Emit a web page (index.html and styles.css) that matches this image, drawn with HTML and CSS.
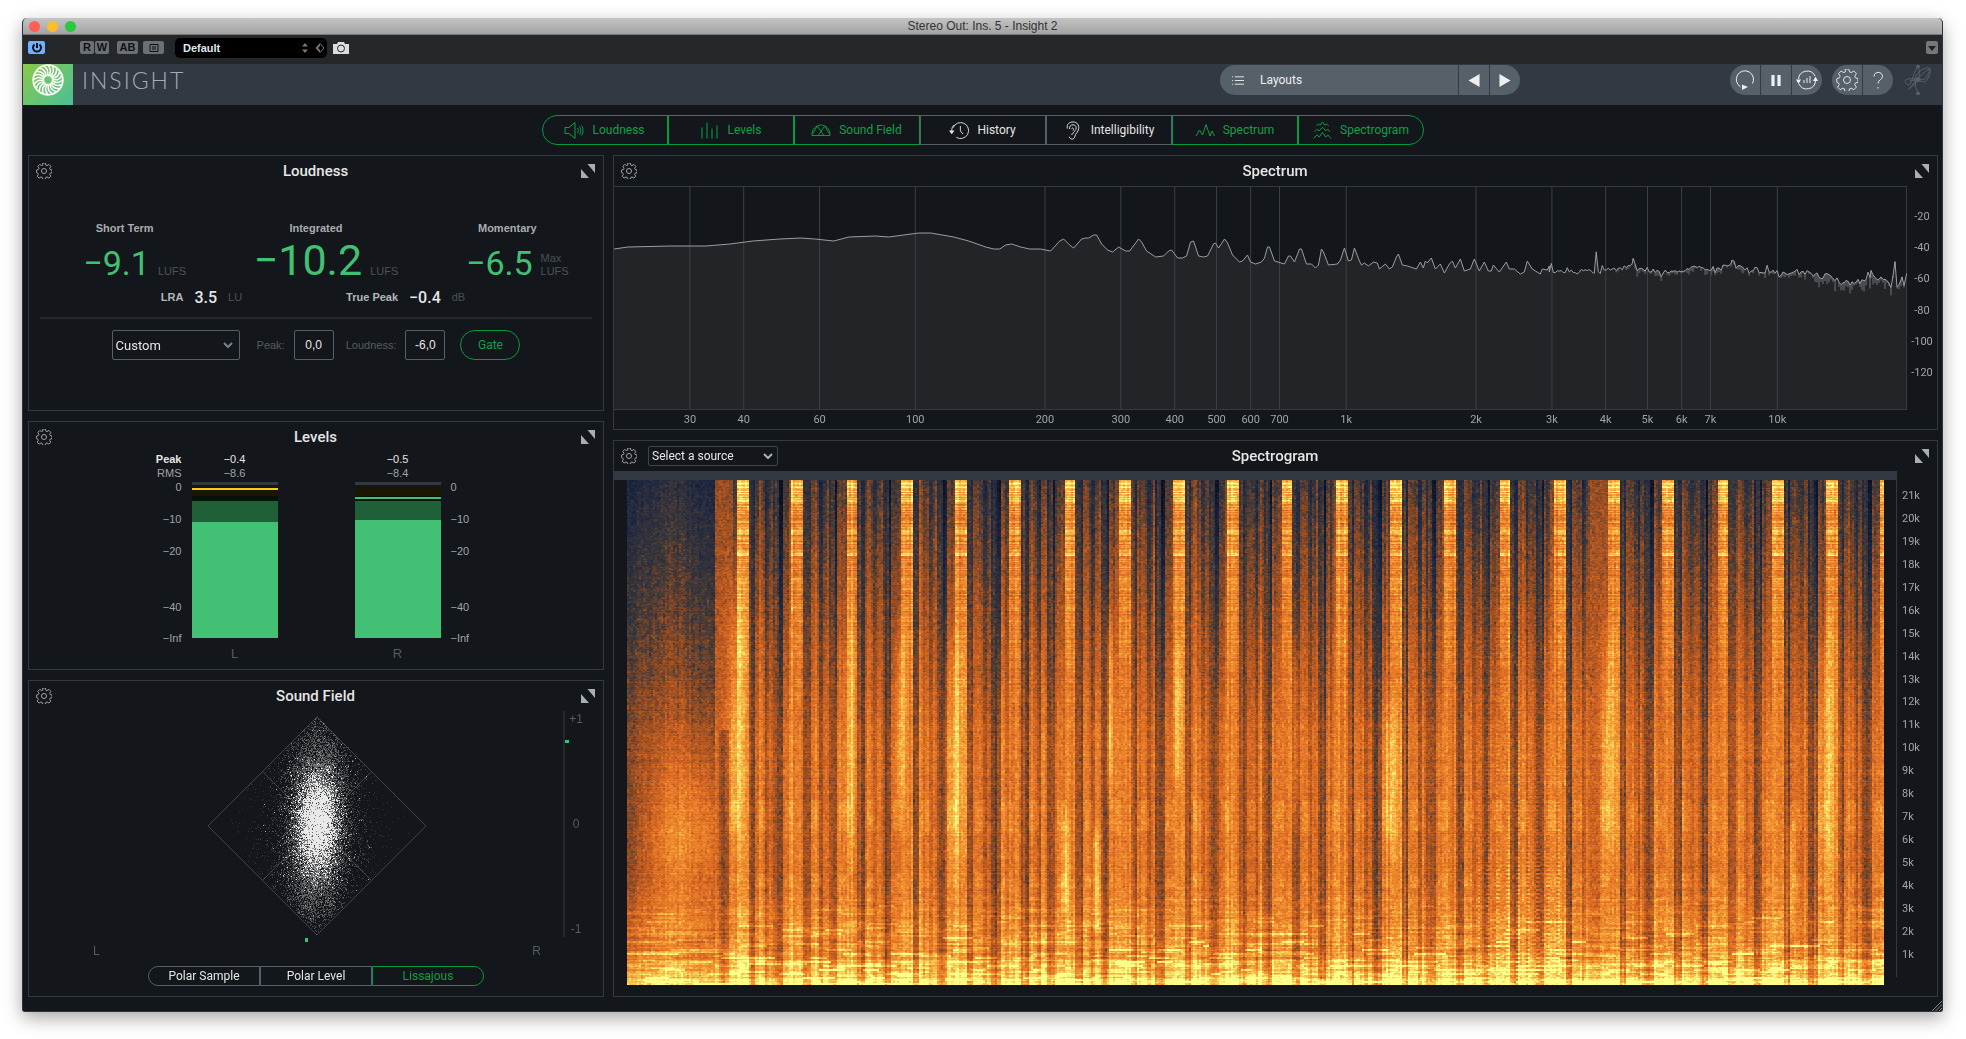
FILE: index.html
```html
<!DOCTYPE html>
<html lang="en">
<head>
    <meta charset="UTF-8">
    <meta name="viewport" content="width=device-width, initial-scale=1.0">
    <title>Stereo Out: Ins. 5 - Insight 2</title>
    <link rel="stylesheet" href="styles.css">
</head>
<body>
    <!-- Shared icons -->
    <svg class="sprite" aria-hidden="true">
        <symbol id="gear" viewBox="0 0 24 24">
            <path d="M10 1.5h4l.8 3.2 1.7.7 2.9-1.7 2.8 2.8-1.7 2.9.7 1.7 2.8.9v4l-2.8.8-.7 1.7 1.7 2.8-2.8 2.8-2.9-1.7-1.7.7-.8 2.9h-4l-.8-2.9-1.7-.7-2.9 1.7-2.8-2.8 1.7-2.8-.7-1.7L.9 16v-4l2.9-.9.7-1.7-1.7-2.9 2.8-2.8 2.9 1.7 1.7-.7z" transform="translate(0 -1.5)"/>
            <circle cx="12" cy="12" r="3.8"/>
        </symbol>
        <symbol id="expand" viewBox="0 0 14 14">
            <path d="M6.500 0H14v9zM0 5v9h8z"/>
        </symbol>
    </svg>

    <div class="window">
        <div class="title-bar">
            <div class="lights">
                <span class="light red"></span>
                <span class="light yellow"></span>
                <span class="light green"></span>
            </div>
            <span class="window-title">Stereo Out: Ins. 5 - Insight 2</span>
        </div>

        <div class="host-bar">
            <button class="host-button power" aria-label="Power">
                <svg viewBox="0 0 12 12"><path d="M3.5 2.5a4 4 0 1 0 5 0M6 1v5"/></svg>
            </button>
            <div class="host-pair">
                <button class="host-button">R</button>
                <button class="host-button">W</button>
            </div>
            <button class="host-button wide">AB</button>
            <button class="host-button wide" aria-label="Compare">
                <svg viewBox="0 0 12 12"><path d="M2 2.500h8v7H2zM4 5h4M4 7h4"/></svg>
            </button>
            <div class="preset">
                <select aria-label="Preset">
                    <option>Default</option>
                </select>
                <svg class="preset-icons" viewBox="0 0 24 12">
                    <path class="solid" d="M0 4.500L3 1l3 3.500zM0 7.500L3 11l3-3.500z"/>
                    <path d="M14 6l4-4.500L22 6l-4 4.500z"/>
                    <path class="solid" d="M14 6l4-4.500V4l-2 2 2 2v2.500z"/>
                </svg>
            </div>
            <button class="camera" aria-label="Snapshot">
                <svg viewBox="0 0 16 12"><path d="M0 2h4l1-2h6l1 2h4v10H0z"/><circle cx="8" cy="6.500" r="3.500"/></svg>
            </button>
            <button class="host-menu" aria-label="Menu">
                <svg viewBox="0 0 12 13"><path d="M2 5h8L6 10z"/></svg>
            </button>
        </div>

        <header class="plugin-bar">
            <div class="logo">
                <svg id="logo" viewBox="-16 -16 32 32"></svg>
            </div>
            <h1>INSIGHT</h1>
            <div class="pill layouts">
                <button class="layout-name">
                    <svg viewBox="0 0 13 11"><path d="M3 1.500h10M3 5.500h10M3 9.500h10M0 1.500h1M0 5.500h1M0 9.500h1"/></svg>
                    Layouts
                </button>
                <button aria-label="Previous layout"><svg viewBox="0 0 12 14"><path class="solid" d="M12 0v14L0 7z"/></svg></button>
                <button aria-label="Next layout"><svg viewBox="0 0 12 14"><path class="solid" d="M0 0v14l12-7z"/></svg></button>
            </div>
            <div class="pill transport">
                <button aria-label="Reset">
                    <svg class="icon-large" viewBox="0 0 22 22"><path d="M6.500 17.800A8.600 8.600 0 1 1 18.500 14.500"/><path class="solid" d="M8 15.500l6 2.500-6 3z"/></svg>
                </button>
                <button aria-label="Pause">
                    <svg viewBox="0 0 12 14"><path class="solid" d="M1 1h3.500v12H1zM7.500 1H11v12H7.500z"/></svg>
                </button>
                <button aria-label="Reset meters">
                    <svg class="icon-large" viewBox="0 0 22 22"><path d="M2.500 10a8.700 8.700 0 0 1 16.500-3M19.500 12a8.700 8.700 0 0 1-16.500 3M8 14v-3M11 14V9M14 14V7"/><path class="solid" d="M0 10.500h5L2.500 15zM17 12h5l-2.500-4.500z"/></svg>
                </button>
            </div>
            <div class="pill">
                <button aria-label="Options"><svg class="icon-large"><use href="#gear"/></svg></button>
                <button aria-label="Help">
                    <svg class="icon-large" viewBox="0 0 22 22"><path d="M7 7.500C7 2 15.500 2 15.500 7.500c0 3-4.500 3.500-4.500 7M11 18v1.500"/></svg>
                </button>
            </div>
            <svg class="brand" viewBox="0 0 28 30"><path d="M14 1.500C9 8 7 22 4 20S-1 15 4 14s17 2 18-1 5-8 4-9-12 8-17 15-6 6-3 4 8-6 9-12-1-9-1-9.500M14 28.500C12 24 9 14 13 9s12-8 13-5-3 14-6 13-10-3-14-1"/><circle cx="14" cy="1.500" r="1.500"/><circle cx="14" cy="28.500" r="1.500"/><circle cx="14" cy="14.500" r="2"/></svg>
        </header>

        <nav class="modules">
            <button class="on">
                <svg viewBox="0 0 20 18"><path d="M1 6h4l6-5v16l-6-5H1zM13.500 6.500c1 1.500 1 3.500 0 5M15.500 5c1.700 2.500 1.700 5.500 0 8M17.500 4c2 3 2 7 0 10"/></svg>
                Loudness
            </button>
            <button class="on">
                <svg viewBox="0 0 20 18"><path d="M2 6v11M7 1v16M12 7v10M17 4v13"/></svg>
                Levels
            </button>
            <button class="on">
                <svg viewBox="0 0 22 18"><path d="M1 14.500C1 7 5.500 3 11 3s10 4 10 11.500zM1.500 13L7 4l7 10.500M8 14.500L15 4l5.500 9"/></svg>
                Sound Field
            </button>
            <button>
                <svg viewBox="0 0 22 20"><path d="M4.500 7A8.800 8.800 0 1 1 8 17.500M12.500 5v5.500l3 3.500M3 10.500C3 7.500 4 5 5.500 4"/><path class="solid" d="M0 10h6l-3 4z"/></svg>
                History
            </button>
            <button>
                <svg viewBox="0 0 16 20"><path d="M2 8C1 3 4.500 1 8 1c4.500 0 6.500 3.500 6 7-.5 4-3.500 5-4 8-.5 4-5 4-6 .5M4.500 8.500C4 5.500 5.500 4 8 4c3 0 4 2.500 3 5-1 2-2.500 2-3 4-.5 1.500-1.500 1.500-2 .500M6.500 8c1-1.500 3 0 1.500 2"/></svg>
                Intelligibility
            </button>
            <button class="on">
                <svg viewBox="0 0 20 18"><path d="M1 14.500l3.500-6 3 5L11 3l4 11.500L17 9.500l2.500 5"/></svg>
                Spectrum
            </button>
            <button class="on">
                <svg viewBox="0 0 20 20"><path d="M1 18.500l4-4 2 2.500L10.500 12l3.500 5 2-2.500 3.500 4M2 11.500l3-3 2 2 3.500-4 3.500 4 2-2 2.500 3M4 5l2.500-2L8 4.500 10.500 1 13 4.500 14.500 3 17 5"/></svg>
                Spectrogram
            </button>
        </nav>

        <main class="panels">
            <div class="column">
                <section class="panel loudness">
                    <div class="panel-header">
                        <button class="gear" aria-label="Loudness settings"><svg><use href="#gear"/></svg></button>
                        <h2>Loudness</h2>
                        <button class="expand" aria-label="Expand Loudness"><svg><use href="#expand"/></svg></button>
                    </div>
                    <div class="reading-labels">
                        <span>Short Term</span>
                        <span>Integrated</span>
                        <span>Momentary</span>
                    </div>
                    <div class="readings">
                        <div class="reading"><span class="value">−9.1</span><span class="unit">LUFS</span></div>
                        <div class="reading"><span class="value big">−10.2</span><span class="unit">LUFS</span></div>
                        <div class="reading"><span class="value">−6.5</span><span class="unit">Max<br>LUFS</span></div>
                    </div>
                    <div class="summary">
                        <div class="stat"><span class="name">LRA</span><span class="number">3.5</span><span class="unit">LU</span></div>
                        <div class="stat"><span class="name">True Peak</span><span class="number">−0.4</span><span class="unit">dB</span></div>
                    </div>
                    <div class="targets">
                        <div class="select-box">
                            <select aria-label="Loudness preset">
                                <option>Custom</option>
                            </select>
                            <svg viewBox="0 0 10 6"><path d="M1 1l4 4 4-4"/></svg>
                        </div>
                        <label for="peak">Peak:</label>
                        <input type="text" id="peak" value="0,0">
                        <label for="target">Loudness:</label>
                        <input type="text" id="target" value="-6,0">
                        <button class="gate">Gate</button>
                    </div>
                </section>

                <section class="panel levels">
                    <div class="panel-header">
                        <button class="gear" aria-label="Levels settings"><svg><use href="#gear"/></svg></button>
                        <h2>Levels</h2>
                        <button class="expand" aria-label="Expand Levels"><svg><use href="#expand"/></svg></button>
                    </div>
                    <div class="level-grid">
                        <div class="level-names"><b>Peak</b><span>RMS</span></div>
                        <div class="level-values"><b>−0.4</b><span>−8.6</span></div>
                        <div></div>
                        <div class="level-values"><b>−0.5</b><span>−8.4</span></div>
                        <div></div>

                        <div class="scale left"><span>0</span><span>−10</span><span>−20</span><span>−40</span><span>−Inf</span></div>
                        <div class="meter">
                            <div class="meter-track">
                                <div class="peak-fill" style="height: 91%"></div>
                                <div class="rms-fill" style="height: 77%"></div>
                                <div class="hold clip" style="bottom: 98%"></div>
                            </div>
                        </div>
                        <div></div>
                        <div class="meter">
                            <div class="meter-track">
                                <div class="peak-fill" style="height: 91%"></div>
                                <div class="rms-fill" style="height: 78%"></div>
                                <div class="hold" style="bottom: 92%"></div>
                            </div>
                        </div>
                        <div class="scale"><span>0</span><span>−10</span><span>−20</span><span>−40</span><span>−Inf</span></div>

                        <div></div>
                        <div class="channel">L</div>
                        <div></div>
                        <div class="channel">R</div>
                        <div></div>
                    </div>
                </section>

                <section class="panel field">
                    <div class="panel-header">
                        <button class="gear" aria-label="Sound Field settings"><svg><use href="#gear"/></svg></button>
                        <h2>Sound Field</h2>
                        <button class="expand" aria-label="Expand Sound Field"><svg><use href="#expand"/></svg></button>
                    </div>
                    <div class="field-body">
                        <canvas id="scope" width="220" height="220"></canvas>
                        <div class="correlation">
                            <span>+1</span><span>0</span><span>-1</span>
                            <i style="top: 13%"></i>
                        </div>
                    </div>
                    <div class="balance"><i style="left: 48%"></i></div>
                    <div class="sides"><span>L</span><span>R</span></div>
                    <div class="modes">
                        <button>Polar Sample</button>
                        <button>Polar Level</button>
                        <button class="on">Lissajous</button>
                    </div>
                </section>
            </div>

            <div class="column">
                <section class="panel spectrum">
                    <div class="panel-header">
                        <button class="gear" aria-label="Spectrum settings"><svg><use href="#gear"/></svg></button>
                        <h2>Spectrum</h2>
                        <button class="expand" aria-label="Expand Spectrum"><svg><use href="#expand"/></svg></button>
                    </div>
                    <div class="spectrum-body">
                        <svg id="plot"></svg>
                        <div class="db-scale"><span>-20</span><span>-40</span><span>-60</span><span>-80</span><span>-100</span><span>-120</span></div>
                    </div>
                </section>

                <section class="panel spectrogram">
                    <div class="panel-header">
                        <div class="header-tools">
                            <button class="gear" aria-label="Spectrogram settings"><svg><use href="#gear"/></svg></button>
                            <div class="select-box source">
                                <select aria-label="Source">
                                    <option>Select a source</option>
                                </select>
                                <svg viewBox="0 0 10 6"><path d="M1 1l4 4 4-4"/></svg>
                            </div>
                        </div>
                        <h2>Spectrogram</h2>
                        <button class="expand" aria-label="Expand Spectrogram"><svg><use href="#expand"/></svg></button>
                    </div>
                    <div class="spectrogram-body">
                        <div class="heat"><canvas id="heat" width="1258" height="504"></canvas></div>
                        <div class="khz-scale" id="khz"></div>
                    </div>
                </section>
            </div>
        </main>
        <svg class="grip" viewBox="0 0 10 10"><path d="M0 10L10 0M3.500 10L10 3.500M7 10l3-3"/></svg>
    </div>

    <script src="script.js"></script>
</body>
</html>
```

FILE: styles.css
```css
* {
    box-sizing: border-box;
}

body {
    margin: 0;
    padding: 18px 23px 26px 22px;
    background-color: #fff;
    color: #e6e6e6;
    font-family: Roboto, "Liberation Sans", sans-serif;
    font-size: 12px;
}

button, input, select {
    margin: 0;
    padding: 0;
    border: 0;
    background: none;
    color: inherit;
    font: inherit;
}

svg {
    display: block;
    fill: none;
    stroke: currentColor;
}

.sprite {
    display: none;
}

.solid {
    fill: currentColor;
    stroke: none;
}

.window {
    position: relative;
    background-color: #13161a;
    border: 1px solid #30343a;
    border-top: 0;
    border-radius: 5px 5px 3px 3px;
    overflow: hidden;
    box-shadow: 0 6px 18px rgba(0, 0, 0, 0.35);
}

/* Host window */
.title-bar {
    display: grid;
    grid-template-columns: 1fr auto 1fr;
    align-items: center;
    height: 17px;
    padding: 0 6px;
    background: linear-gradient(#c4c4c4, #a3a3a3);
    border-bottom: 1px solid #777;
}

.lights {
    display: flex;
    gap: 7px;
}

.light {
    width: 11px;
    height: 11px;
    border-radius: 50%;
}

.light.red {
    background-color: #ff5f57;
}

.light.yellow {
    background-color: #febc2e;
}

.light.green {
    background-color: #28c840;
}

.window-title {
    color: #333;
    font-family: "Liberation Sans", sans-serif;
    font-size: 12px;
    line-height: 16px;
}

.host-bar {
    display: flex;
    align-items: center;
    height: 29px;
    padding: 0 4px 4px 5px;
    background-color: #24282b;
}

.host-button {
    display: flex;
    align-items: center;
    justify-content: center;
    width: 14px;
    height: 13px;
    border-radius: 2px;
    background-color: #6b7077;
    color: #111;
    font-family: "Liberation Sans", sans-serif;
    font-size: 11px;
    font-weight: bold;
    line-height: 13px;
}

.host-button svg {
    width: 12px;
    height: 12px;
}

.host-button.power {
    width: 17px;
    margin-right: 35px;
    background-color: #6fb1ff;
    stroke-width: 2;
}

.host-pair {
    display: flex;
    gap: 1px;
    margin-right: 8px;
}

.host-button.wide {
    width: 21px;
    margin-right: 5px;
}

.preset {
    position: relative;
    width: 152px;
    height: 20px;
    margin: 0 6px;
}

.preset select {
    width: 100%;
    height: 100%;
    padding-left: 8px;
    border-radius: 5px;
    background-color: #000;
    appearance: none;
    color: #dfe8f0;
    font-family: "Liberation Sans", sans-serif;
    font-size: 11px;
    font-weight: bold;
}

.preset-icons {
    position: absolute;
    top: 4px;
    right: 1px;
    width: 24px;
    height: 12px;
    color: #777;
}

.camera svg {
    width: 16px;
    height: 12px;
    fill: #ddd;
    stroke: none;
}

.camera circle {
    stroke: #24282b;
}

.host-menu {
    margin-left: auto;
    border-radius: 2px;
    background-color: #777;
    color: #222;
}

.host-menu svg {
    width: 12px;
    height: 13px;
    fill: #222;
    stroke: none;
}

/* Plugin header */
.plugin-bar {
    display: flex;
    align-items: flex-start;
    height: 41px;
    padding-right: 10px;
    background-color: #323943;
}

.logo {
    width: 50px;
    height: 41px;
    background: linear-gradient(135deg, #8bc94a, #4abf97);
    color: #fff;
}

.logo svg {
    width: 32px;
    height: 32px;
    margin-left: 9px;
}

h1 {
    flex: 1;
    margin: 0 0 0 9px;
    color: #a5adb4;
    font-family: Lato, sans-serif;
    font-size: 23px;
    font-weight: 300;
    line-height: 32px;
    letter-spacing: 2px;
}

.pill {
    display: flex;
    gap: 1px;
    margin-top: 1px;
    border-radius: 15px;
    overflow: hidden;
}

.pill button {
    display: flex;
    align-items: center;
    justify-content: center;
    width: 30px;
    height: 30px;
    background-color: #566068;
    color: #eee;
}

.pill svg {
    width: 12px;
    height: 13px;
}

.pill .icon-large {
    width: 22px;
    height: 22px;
}

.layouts {
    margin-right: 210px;
}

.pill .layout-name {
    justify-content: flex-start;
    gap: 16px;
    width: 238px;
    padding-left: 12px;
}

.transport {
    margin-right: 10px;
}

.brand {
    width: 28px;
    height: 30px;
    margin: 1px 0 0 11px;
    color: #59626b;
}

.brand circle {
    fill: currentColor;
}

/* Module switches */
.modules {
    display: flex;
    justify-content: center;
    padding: 10px 0;
}

.modules button {
    display: flex;
    align-items: center;
    justify-content: center;
    gap: 8px;
    width: 126px;
    height: 30px;
    border: 1px solid #566068;
}

.modules button:first-child {
    border-radius: 15px 0 0 15px;
}

.modules button:last-child {
    border-radius: 0 15px 15px 0;
}

.modules svg {
    width: 20px;
    height: 19px;
}

.modules .on, .modes .on {
    border-color: #039b3e;
    color: #0aa347;
}

/* Panels */
.panels {
    display: grid;
    grid-template-columns: 576fr 1325fr;
    gap: 9px;
    padding: 0 4px 14px 5px;
}

.column {
    display: flex;
    flex-direction: column;
    gap: 10px;
    min-width: 0;
}

.panel {
    border: 1px solid #323941;
}

.panel-header {
    display: grid;
    grid-template-columns: 1fr auto 1fr;
    align-items: center;
    height: 30px;
    padding: 0 8px 0 7px;
}

h2 {
    margin: 0;
    font-size: 15px;
    font-weight: 500;
}

.gear {
    width: 16px;
    height: 16px;
    color: #9aa0a5;
    stroke-width: 1.5;
}

.gear svg {
    width: 16px;
    height: 16px;
}

.expand {
    justify-self: end;
    width: 14px;
    height: 14px;
    color: #a9aeb2;
}

.expand svg {
    width: 14px;
    height: 14px;
    fill: currentColor;
    stroke: none;
}

/* Loudness */
.loudness {
    height: 256px;
}

.reading-labels, .readings {
    display: grid;
    grid-template-columns: repeat(3, 1fr);
    text-align: center;
}

.reading-labels {
    padding-top: 34px;
    color: #a9adb0;
    font-family: "Liberation Sans", sans-serif;
    font-size: 11px;
    font-weight: bold;
    line-height: 16px;
}

.readings {
    align-items: baseline;
    height: 48px;
}

.reading {
    display: flex;
    align-items: last baseline;
    justify-content: center;
    gap: 8px;
    padding-left: 20px;
}

.value {
    color: #42c073;
    font-size: 34px;
    line-height: 48px;
}

.value.big {
    font-size: 43px;
}

.unit {
    color: #4c5257;
    font-family: "Liberation Sans", sans-serif;
    font-size: 11px;
    line-height: 13px;
    text-align: left;
}

.summary {
    display: flex;
    justify-content: center;
    gap: 104px;
    margin: 3px 11px 0;
    padding: 0 6px 10px 0;
    border-bottom: 2px solid #24282c;
}

.stat {
    display: flex;
    align-items: center;
    gap: 11px;
    height: 20px;
}

.stat .name {
    color: #b4b7ba;
    font-family: "Liberation Sans", sans-serif;
    font-size: 11px;
    font-weight: bold;
}

.stat .number {
    font-size: 16px;
    font-weight: 500;
}

.targets {
    display: flex;
    align-items: center;
    justify-content: center;
    padding-top: 11px;
    color: #565c61;
}

.targets label {
    margin: 0 9px 0 12px;
    font-family: "Liberation Sans", sans-serif;
    font-size: 11px;
}

.targets input {
    width: 40px;
    height: 30px;
    border: 1px solid #566068;
    border-radius: 2px;
    color: #e6e6e6;
    font-family: "Liberation Sans", sans-serif;
    text-align: center;
}

.gate {
    width: 60px;
    height: 30px;
    margin-left: 15px;
    border: 1px solid #039b3e;
    border-radius: 15px;
    color: #0aa347;
}

.select-box {
    position: relative;
    width: 128px;
    height: 30px;
    margin-right: 5px;
}

.select-box select {
    width: 100%;
    height: 100%;
    padding-left: 3px;
    border: 1px solid #566068;
    border-radius: 2px;
    appearance: none;
    color: #e6e6e6;
    font-size: 13px;
}

.select-box svg {
    position: absolute;
    top: 50%;
    right: 7px;
    width: 10px;
    height: 6px;
    margin-top: -3px;
    color: #7b848b;
    stroke-width: 2;
}

/* Levels */
.levels {
    height: 249px;
}

.level-grid {
    display: grid;
    grid-template-columns: 40px 86px 57px 86px 40px;
    column-gap: 10px;
    justify-content: center;
    font-family: "Liberation Sans", sans-serif;
    font-size: 11px;
}

.level-names, .level-values {
    display: flex;
    flex-direction: column;
    color: #a0a4a8;
    line-height: 14px;
}

.level-names {
    text-align: right;
}

.level-values {
    text-align: center;
}

.level-names b, .level-values b {
    color: #e6e6e6;
}

.level-values b {
    font-weight: normal;
}

.scale {
    display: grid;
    grid-template-rows: 32px 32px 56px 31px 16px;
    height: 156px;
    color: #a0a4a8;
    line-height: 14px;
}

.scale.left {
    text-align: right;
}

.meter {
    margin-top: 2px;
    border-top: 3px solid #323941;
    padding-top: 2px;
}

.meter-track {
    position: relative;
    height: 151px;
    background: linear-gradient(#1a1600 9px, #04140b 9px);
}

.peak-fill, .rms-fill, .hold {
    position: absolute;
    bottom: 0;
    width: 100%;
}

.peak-fill {
    background-color: #1f6038;
}

.rms-fill {
    background-color: #42c073;
}

.hold {
    height: 2px;
    background-color: #42c073;
}

.hold.clip {
    background-color: #f0cf10;
}

.channel {
    padding-top: 8px;
    color: #555c62;
    font-size: 13px;
    line-height: 16px;
    text-align: center;
}

/* Sound field */
.field {
    height: 317px;
}

.field-body {
    display: flex;
    justify-content: center;
    height: 226px;
    padding-left: 41px;
}

.field-body canvas {
    width: 220px;
    height: 220px;
    margin: 5px auto 0;
}

.correlation {
    position: relative;
    display: flex;
    flex-direction: column;
    align-items: center;
    justify-content: space-between;
    width: 40px;
    padding: 0 16px 0 0;
    border-left: 2px solid #24282c;
    color: #555c62;
    font-family: "Liberation Sans", sans-serif;
    line-height: 16px;
}

.correlation i {
    position: absolute;
    left: 0;
    width: 4px;
    height: 3px;
    background-color: #42c073;
}

.balance {
    position: relative;
    height: 6px;
}

.balance i {
    position: absolute;
    top: 1px;
    width: 3px;
    height: 4px;
    background-color: #42c073;
}

.sides {
    display: flex;
    justify-content: space-between;
    padding: 0 62px 0 64px;
    color: #555c62;
    font-family: "Liberation Sans", sans-serif;
    line-height: 16px;
}

.modes {
    display: flex;
    justify-content: center;
    padding-top: 7px;
}

.modes button {
    width: 112px;
    height: 20px;
    border: 1px solid #566068;
}

.modes button:first-child {
    border-radius: 10px 0 0 10px;
}

.modes button:last-child {
    border-radius: 0 10px 10px 0;
}

/* Spectrum */
.spectrum-body {
    display: flex;
}

#plot {
    flex: 1;
    height: 243px;
    min-width: 0;
}

#plot, #plot svg {
    stroke: none;
}

#plot text {
    fill: #a0a4a8;
    font-size: 11px;
    text-anchor: middle;
}

.db-scale {
    display: flex;
    flex-direction: column;
    justify-content: space-between;
    width: 30px;
    height: 172px;
    margin-top: 23px;
    color: #a0a4a8;
    font-size: 11px;
    line-height: 16px;
    text-align: center;
}

.spectrogram {
    flex: 1;
}

.header-tools {
    display: flex;
    align-items: center;
    gap: 11px;
}

.source {
    width: 130px;
    height: 20px;
}

.source select {
    border-color: #3c444b;
    font-size: 12px;
}

.source svg {
    right: 5px;
    color: #b0b4b8;
}

.spectrogram-body {
    display: flex;
}

.heat {
    flex: 1;
    padding: 0 12px 0 13px;
    border-top: 9px solid #323943;
}

.heat canvas {
    display: block;
    width: 100%;
    height: 505px;
    image-rendering: pixelated;
}

.khz-scale {
    display: flex;
    flex-direction: column;
    justify-content: space-between;
    width: 41px;
    height: 506px;
    padding: 17px 0 14px 5px;
    border-left: 1px solid #323941;
    color: #a0a4a8;
    font-size: 11px;
    line-height: 16px;
}

.grip {
    position: absolute;
    right: 0;
    bottom: 0;
    width: 10px;
    height: 10px;
    color: #888;
}
```

FILE: script.js
```js
// Small seeded generator so the meters look the same on every load
let seed = 7;
function random() {
    seed = (seed * 1664525 + 1013904223) % 4294967296;
    return seed / 4294967296;
}

function gauss() {
    return random() + random() + random() + random() - 2;
}

function svgNode(parent, name, attributes) {
    const node = document.createElementNS('http://www.w3.org/2000/svg', name);
    for (const key in attributes) {
        node.setAttribute(key, attributes[key]);
    }
    parent.appendChild(node);
    return node;
}

// Logo: ring with curved blades
function drawLogo() {
    const logo = document.getElementById('logo');
    svgNode(logo, 'circle', { r: 14.8, 'stroke-width': 1.8 });
    for (let i = 0; i < 20; i++) {
        svgNode(logo, 'path', {
            d: 'M0 -4 C 3 -7 4 -10 0 -14.500',
            'stroke-width': 1.5,
            transform: `rotate(${i * 18})`
        });
    }
}

// Spectrum
const curve = [
    0,63, 14,61, 56,60, 92,60, 116,58, 139,55, 166,53, 187,52, 201,53, 220,55, 235,51, 262,50, 275,51, 305,47,
    317,47, 340,51, 355,55, 372,61, 380,63, 386,63, 392,59, 398,58, 407,61, 416,63, 427,63, 437,65, 446,55, 450,53,
    456,59, 460,62, 468,53, 472,52, 475,52, 480,49, 483,49, 488,58, 494,64, 499,66, 505,61, 512,65, 516,65, 522,57,
    525,53, 528,56, 533,65, 542,71, 550,70, 555,65, 558,64, 564,72, 569,72, 573,70, 577,56, 580,55, 585,70, 590,71,
    594,70, 600,58, 602,57, 605,62, 611,53, 614,57, 619,69, 626,76, 629,75, 634,69, 637,76, 642,78, 648,76, 651,72,
    654,61, 656,61, 661,75, 671,78, 675,70, 677,70, 681,76, 686,63, 688,63, 693,78, 698,78, 702,82, 705,79, 708,63,
    710,66, 715,79, 724,78, 727,74, 731,62, 735,75, 738,74, 741,62, 746,75, 748,79, 751,77, 755,80, 760,76, 764,77,
    766,83, 772,78, 776,83, 779,81, 783,71, 785,68, 789,79, 794,80, 803,83, 807,76, 810,82, 812,75, 814,77, 818,72,
    822,83, 827,78, 831,87, 836,78, 839,75, 842,82, 847,73, 851,85, 857,83, 861,73, 866,85, 871,76, 875,85, 878,85,
    880,79, 886,86, 893,76, 896,83, 901,83, 907,88, 911,86, 914,75, 919,83, 927,88, 929,83, 934,84, 936,80
];
const tail = [936,84, 950,87, 981,84, 983,68, 985,85, 1015,81, 1020,73, 1024,82, 1050,87, 1080,82, 1110,82, 1119,75, 1130,83,
    1160,88, 1194,86, 1210,90, 1231,97, 1247,98, 1258,91, 1272,93, 1278,99, 1282,78, 1284,101, 1289,91, 1291,100, 1294,87];

function drawSpectrum() {
    const plot = document.getElementById('plot');
    const inner = svgNode(plot, 'svg', { width: '100%', height: 223, viewBox: '0 0 1294 223', preserveAspectRatio: 'none' });
    let line = 'M';
    for (let i = 0; i < curve.length; i += 2) {
        line += `${curve[i]} ${curve[i + 1]} `;
    }
    let shade = '';
    for (let i = 0; i < tail.length - 2; i += 2) {
        for (let x = tail[i]; x < tail[i + 2]; x += 2) {
            const k = (x - tail[i]) / (tail[i + 2] - tail[i]);
            const level = tail[i + 1] + (tail[i + 3] - tail[i + 1]) * k;
            const y = level + gauss() * 3 - (random() > 0.95 ? 5 : 0);
            line += `${x} ${y.toFixed(1)} `;
            if (x > 1000) {
                shade += `M${x} ${y.toFixed(1)}v${(random() * (x > 1200 ? 11 : 6)).toFixed(1)}`;
            }
        }
    }
    line += '1294 87';
    svgNode(inner, 'path', { d: line + 'V223H0Z', fill: '#232428' });
    svgNode(inner, 'path', { d: shade, stroke: '#4a4b4e', 'stroke-width': 2 });

    const ticks = [30, 40, 60, 100, 200, 300, 400, 500, 600, 700, 1000, 2000, 3000, 4000, 5000, 6000, 7000, 10000];
    ticks.forEach(hz => {
        const x = (Math.log10(hz / 20) / 3 * 100).toFixed(2) + '%';
        svgNode(plot, 'line', { x1: x, x2: x, y1: 0, y2: 223, stroke: '#3a4147' });
        svgNode(plot, 'text', { x: x, y: 237 }).textContent = hz < 1000 ? hz : hz / 1000 + 'k';
    });
    svgNode(plot, 'line', { x1: 0, x2: '100%', y1: 0.5, y2: 0.5, stroke: '#323941' });
    svgNode(plot, 'line', { x1: 0, x2: '100%', y1: 223.5, y2: 223.5, stroke: '#323941' });
    svgNode(plot, 'line', { x1: '100%', x2: '100%', y1: 0, y2: 223, stroke: '#323941', 'stroke-width': 2 });

    const top = svgNode(plot, 'svg', { width: '100%', height: 223, viewBox: '0 0 1294 223', preserveAspectRatio: 'none' });
    svgNode(top, 'path', { d: line, stroke: '#9d9ea0', fill: 'none', 'stroke-linejoin': 'round' });
}

// Lissajous cloud inside the diamond
function drawScope() {
    const context = document.getElementById('scope').getContext('2d');
    context.strokeStyle = '#3c4247';
    context.beginPath();
    context.moveTo(110, 1);
    context.lineTo(219, 110);
    context.lineTo(110, 219);
    context.lineTo(1, 110);
    context.closePath();
    context.moveTo(55, 55);
    context.lineTo(165, 165);
    context.moveTo(165, 55);
    context.lineTo(55, 165);
    context.stroke();

    function cloud(count, spreadX, spreadY, color) {
        context.fillStyle = color;
        for (let i = 0; i < count; i++) {
            const dy = gauss() * spreadY;
            const dx = gauss() * spreadX + dy * -0.02;
            if (Math.abs(dx) + Math.abs(dy) < 108) {
                context.fillRect(Math.round(110 + dx), Math.round(108 + dy), 1, 1);
            }
        }
    }
    cloud(2200, 60, 85, 'rgba(150, 150, 150, 0.2)');
    cloud(7000, 33, 100, 'rgba(150, 150, 150, 0.35)');
    cloud(9000, 22, 72, 'rgba(150, 150, 150, 0.45)');
    cloud(400, 36, 70, '#aaa');
    cloud(3800, 17, 40, '#e8e8e8');
}

// Spectrogram
const colors = [
    [0, 8, 14, 26], [0.2, 24, 36, 66], [0.36, 62, 56, 56], [0.5, 150, 76, 34],
    [0.65, 218, 104, 34], [0.78, 242, 144, 48], [0.9, 250, 200, 80], [1, 255, 255, 140]
];

function heatColor(v) {
    v = Math.max(0, Math.min(1, v));
    let i = 1;
    while (i < colors.length - 1 && v > colors[i][0]) {
        i++;
    }
    const a = colors[i - 1];
    const b = colors[i];
    const k = (v - a[0]) / (b[0] - a[0]);
    return [1, 2, 3].map(c => a[c] + (b[c] - a[c]) * k);
}

// offset from the beat, level at the top, level at the bottom
const pattern = [
    [0, 0.5, 0.09], [6, 0.02, -0.1], [10, -0.06, -0.15], [13, 0.1, 0.06], [19, 0.06, 0.05], [22, -0.04, -0.03],
    [26, 0.04, 0.06], [29, 0.12, 0.02], [31, -0.06, -0.1], [33, 0, -0.15], [37, -0.24, -0.12],
    [40, 0.06, 0.06], [46, 0.1, 0.06], [49, 0.5, 0.09]
];

// bright strokes: x, y, half width, half height
const strokes = [
    [109, 240, 9, 135], [223, 260, 5, 120], [273, 240, 5, 90], [329, 275, 9, 120], [482, 220, 4, 90],
    [550, 235, 4, 70], [669, 250, 4, 90], [437, 390, 4, 55], [468, 395, 5, 50], [764, 300, 8, 80],
    [983, 270, 8, 115], [1201, 280, 8, 130], [1164, 390, 4, 55]
];

function drawHeat() {
    const canvas = document.getElementById('heat');
    const context = canvas.getContext('2d');
    const width = canvas.width;
    const height = canvas.height;
    const image = context.createImageData(width, height);
    const period = 54.5;
    const rows = [];
    const bands = [];
    for (let y = 0; y < height; y++) {
        rows.push(random());
        // each low band is cut into notes of random length
        const notes = [];
        while (notes.length < width) {
            const level = random() * random();
            const end = notes.length + 6 + random() * 30;
            while (notes.length < end) {
                notes.push(level);
            }
        }
        bands.push(notes);
    }

    for (let x = 0; x < width; x += 2) {
        const offset = (x - 115 + period * 4) % period;
        const step = pattern.filter(p => p[0] <= offset).pop();
        const beat = offset < 6 || offset >= 49;
        const half = ((x - 115 + period * 4 + 13) % (period / 2)) / (period / 2);
        const columnNoise = gauss() * 0.06;
        let drift = 0;
        for (let y = 0; y < height; y++) {
            const t = y / height;
            const lower = Math.min(1, t / 0.5);
            let v;
            if (x < 88) {
                v = 0.22 + 0.38 * Math.min(1, t * 1.4) + 0.08 * Math.exp(-Math.pow((x - 45) / 22, 2)) + columnNoise * 0.5;
                v += 0.12 * Math.exp(-Math.pow((x - 65) / 35, 2) - Math.pow((y - 335) / 70, 2));
                v -= 0.1 * Math.exp(-Math.pow(x / 20, 2) - Math.pow((y - 370) / 70, 2));
            } else {
                v = 0.3 + 0.33 * Math.min(1, Math.pow(t * 1.9, 0.9));
                v += step[1] * (1 - lower) + step[2] * lower + columnNoise;
                if (beat) {
                    v += (rows[y] - 0.5) * 0.22 * (1 - lower);
                    v += y < 23 || Math.abs(y - 74) < 2 || Math.abs(y - 51) < 2 ? 0.1 : -0.04 * (1 - lower);
                }
                if ((x < 106 && y < 250) || (x > 962 && x < 985)) {
                    v = Math.max(v, 0.5 + 0.12 * lower);
                }
                if (half < 0.35 && ((y > 318 && y < 350) || (y > 392 && y < 406) || (y > 415 && y < 419))) {
                    v += 0.06;
                }
                if (x > 850 && x < 940 && y > 120) {
                    v += x % 10 < 4 && y % 4 < 2 ? 0.1 * t + (y > 380 ? 0.06 : 0) : 0;
                }
            }
            strokes.forEach(s => {
                const dx = (x - s[0]) / s[2];
                const dy = (y - s[1]) / s[3];
                if (Math.abs(dx) < 2 && Math.abs(dy) < 2) {
                    v += 0.17 * Math.exp(-dx * dx - dy * dy * dy * dy);
                }
            });
            // harmonics pile up towards the lowest bands
            if (y > 400) {
                const k = (y - 400) / 104;
                const note = bands[Math.floor(y / 2)][x];
                v += k * 0.18 + (note - 0.25) * (y % 4 < 2 ? 0.4 : 0.2) * Math.min(1, k * 1.5);
                v += y > 478 ? 0.08 : 0;
                v += y > 496 ? 0.12 : 0;
            }
            drift = drift * 0.4 + gauss() * 0.06;
            v += drift + (rows[y] - 0.5) * 0.05 * lower;
            const rgb = heatColor(v);
            for (let i = 0; i < 2; i++) {
                const p = (y * width + x + i) * 4;
                image.data[p] = rgb[0];
                image.data[p + 1] = rgb[1];
                image.data[p + 2] = rgb[2];
                image.data[p + 3] = 255;
            }
        }
    }
    context.putImageData(image, 0, 0);
}

function drawScale() {
    const scale = document.getElementById('khz');
    for (let k = 21; k > 0; k--) {
        const label = document.createElement('span');
        label.textContent = k + 'k';
        scale.appendChild(label);
    }
}

drawLogo();
drawSpectrum();
drawScope();
drawHeat();
drawScale();
```
